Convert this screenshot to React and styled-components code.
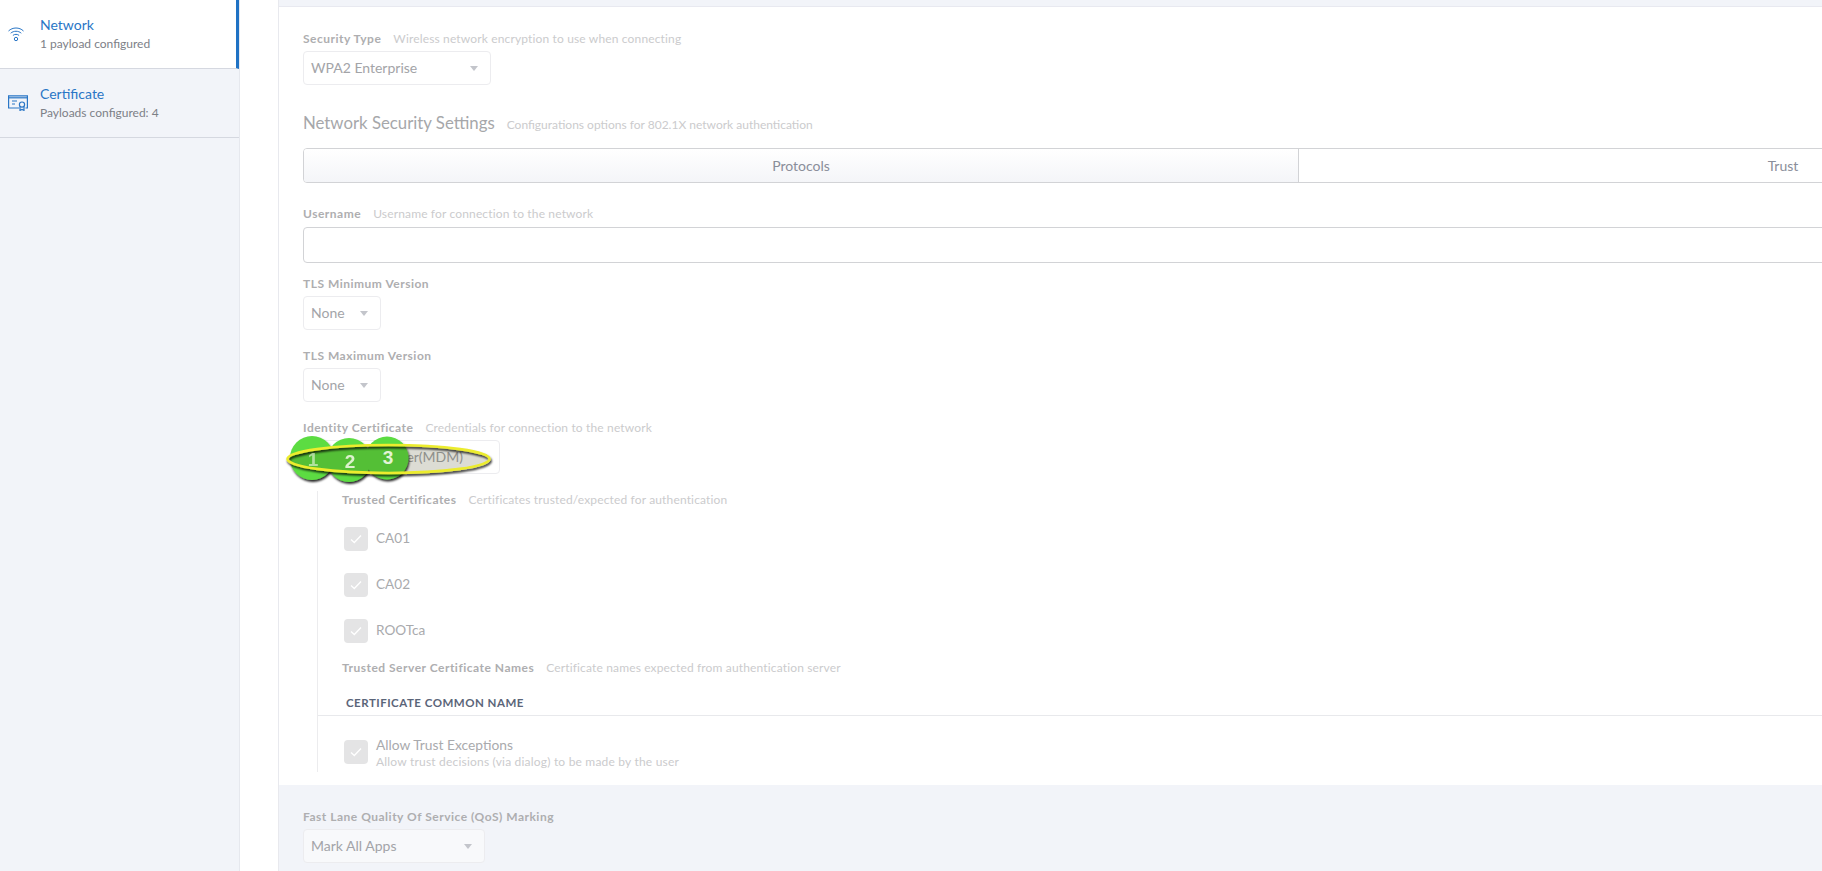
import React from "react";
import styled, { createGlobalStyle } from "styled-components";

const Global = createGlobalStyle`
  html, body { margin: 0; padding: 0; background: #fff; }
  body { font-family: Lato, "Open Sans", sans-serif; }
`;

const Page = styled.div`
  display: flex;
  width: 1822px;
  height: 871px;
  overflow: hidden;
  background: #fff;
`;

const Sidebar = styled.nav`
  flex: 0 0 240px;
  background: #f2f4f9;
  border-right: 1px solid #e6e8ee;
  box-sizing: border-box;
`;

const NavItem = styled.div`
  display: flex;
  align-items: center;
  height: ${(p) => p.$h}px;
  box-sizing: border-box;
  padding-left: 8px;
  gap: 12px;
  background: ${(p) => (p.$active ? "#fff" : "transparent")};
  border-bottom: 1px solid #d5d8e0;
  border-right: ${(p) => (p.$active ? "3px solid #1f72c4" : "none")};
`;

const IconSlot = styled.div`
  flex: 0 0 20px;
  display: flex;
`;

const NavText = styled.div`
  display: flex;
  flex-direction: column;
  gap: 1px;
  margin-top: -1px;
`;

const NavTitle = styled.div`
  font-size: 14px;
  line-height: 20px;
  color: #2a76c6;
`;

const NavSub = styled.div`
  font-size: 12px;
  line-height: 16px;
  color: #7d8087;
`;

const Main = styled.main`
  flex: none;
  width: 2100px;
  margin-left: 38px;
  position: relative;
  border-left: 1px solid #e8e9ee;
`;

const TopStrip = styled.div`
  height: 6px;
  background: #f2f4f9;
  border-bottom: 1px solid #e8e9f0;
`;

const Panel = styled.section`
  padding: 23px 24px 0;
  height: 778px;
  box-sizing: border-box;
  display: flex;
  flex-direction: column;
`;

const LabelRow = styled.div`
  display: flex;
  align-items: baseline;
  gap: 12px;
  height: 18px;
  line-height: 18px;
  margin-top: ${(p) => p.$top || 0}px;
`;

const Label = styled.span`
  font-size: 12px;
  font-weight: 700;
  letter-spacing: 0.5px;
  color: ${(p) => p.$color || "#aeaeb0"};
`;

const Hint = styled.span`
  font-size: 12px;
  letter-spacing: ${(p) => (p.$tight ? "0" : "0.15px")};
  color: #cbcbcd;
`;

const Select = styled.div`
  display: flex;
  align-items: center;
  justify-content: ${(p) => (p.$end ? "flex-end" : "space-between")};
  box-sizing: border-box;
  width: ${(p) => p.$w}px;
  height: 34px;
  margin-top: ${(p) => p.$top ?? 3}px;
  padding: 0 ${(p) => p.$pr || 12}px 2px 7px;
  border: 1px solid #ececef;
  border-radius: 4px;
  background: ${(p) => p.$bg || "#fff"};
  font-size: 14px;
  color: #a3a4a8;
`;

const Caret = styled.i`
  width: 0;
  height: 0;
  margin-top: 2px;
  border-left: 4.5px solid transparent;
  border-right: 4.5px solid transparent;
  border-top: 5px solid #c3c5cb;
`;

const Heading = styled.div`
  display: flex;
  align-items: baseline;
  gap: 12px;
  margin-top: 25px;
  height: 26px;
  line-height: 26px;
`;

const HeadingText = styled.span`
  font-size: 16.8px;
  color: #a6a7aa;
`;

const Tabs = styled.div`
  display: flex;
  height: 35px;
  margin-top: 12px;
  box-sizing: border-box;
  border: 1px solid #d2d3d6;
  border-radius: 4px;
  overflow: hidden;
`;

const Tab = styled.div`
  flex: 0 0 ${(p) => p.$w}px;
  box-sizing: border-box;
  display: flex;
  align-items: center;
  justify-content: center;
  font-size: 14px;
  color: #8a8e9a;
  background: ${(p) => (p.$on ? "linear-gradient(#ffffff, #f4f5f8)" : "#fff")};
  border-right: ${(p) => (p.$on ? "1px solid #d2d3d6" : "none")};
`;

const TextBox = styled.div`
  height: 36px;
  margin-top: 4px;
  box-sizing: border-box;
  border: 1px solid #d2d3d6;
  border-radius: 4px;
`;

const Nested = styled.div`
  margin: 17px 0 0 14px;
  height: 281px;
  border-left: 1px solid #ececee;
  display: flex;
  flex-direction: column;
`;

const NestedLabel = styled(LabelRow)`
  padding-left: 24px;
`;

const CheckRow = styled.div`
  display: flex;
  align-items: center;
  gap: 8px;
  height: 24px;
  padding-left: 26px;
  margin-top: ${(p) => p.$top}px;
  font-size: 13.6px;
  color: #a9aaad;
`;

const CheckLabel = styled.span`
  margin-top: -2px;
`;

const CheckBox = styled.span`
  flex: none;
  display: flex;
  align-items: center;
  justify-content: center;
  width: 24px;
  height: 24px;
  border-radius: 4px;
  background: #e4e4e5;
`;

const TableHead = styled.div`
  margin-top: 17px;
  padding: 0 0 3px 28px;
  height: 18px;
  line-height: 18px;
  font-size: 11.5px;
  font-weight: 700;
  letter-spacing: 0.5px;
  color: #5b6579;
  border-bottom: 1px solid #e8e9ec;
`;

const AllowRow = styled.div`
  display: flex;
  gap: 8px;
  padding-left: 26px;
  margin-top: 24px;
`;

const AllowText = styled.div`
  display: flex;
  flex-direction: column;
  margin-top: -5px;
`;

const AllowTitle = styled.div`
  font-size: 13.8px;
  line-height: 19px;
  color: #a9aaad;
`;

const AllowSub = styled.div`
  font-size: 12px;
  line-height: 16px;
  letter-spacing: 0.2px;
  color: #cbcbcd;
`;

const Footer = styled.section`
  background: #f2f4f9;
  padding: 20px 24px 0;
  height: 100px;
  box-sizing: border-box;
`;

const Marker = styled.svg`
  position: absolute;
  left: 1px;
  top: 428px;
  pointer-events: none;
`;

const Check = () => (
  <svg width="14" height="12" viewBox="0 0 14 12" fill="none">
    <path d="M2 6.5 L5.3 9.5 L12 2.5" stroke="#fff" strokeWidth="1.3" />
  </svg>
);

const WifiIcon = () => (
  <svg width="16" height="15" viewBox="0 0 16 15" fill="none" stroke="#2a76c6" strokeWidth="1">
    <path d="M0.5 4 C4.5 0 11.5 0 15.5 4" />
    <path d="M2.7 6.2 C5.6 3.6 10.4 3.6 13.3 6.2" />
    <path d="M4.9 8.4 C6.6 7 9.4 7 11.1 8.4" />
    <circle cx="8" cy="12" r="1.7" />
  </svg>
);

const CertIcon = () => (
  <svg width="20" height="16" viewBox="0 0 20 16" fill="none" stroke="#2a76c6" strokeWidth="1.2">
    <path d="M11 13 H0.6 V0.8 H19.4 V13 H17.5" />
    <path d="M0.6 2.8 H19.4" />
    <path d="M4 6 H9 M4 9 H7" />
    <circle cx="14" cy="9.6" r="2.6" />
    <path d="M12 11.6 V15.4 L14 14.4 L16 15.4 V11.6" />
  </svg>
);

const Annotation = () => (
  <Marker width="240" height="70" viewBox="0 0 240 70">
    <defs>
      <filter id="drop" x="-20%" y="-20%" width="140%" height="160%">
        <feDropShadow dx="1" dy="2" stdDeviation="1.1" floodColor="#000" floodOpacity="0.85" />
      </filter>
    </defs>
    <g filter="url(#drop)">
      <circle cx="32" cy="30" r="22" fill="#5cdc42" />
      <circle cx="69" cy="32" r="22" fill="#5cdc42" />
      <circle cx="107" cy="30" r="21.5" fill="#5cdc42" />
    </g>
    <ellipse cx="108.5" cy="31" rx="101" ry="14" fill="rgba(50,50,0,0.17)" />
    <ellipse cx="108.5" cy="31" rx="101" ry="14" fill="none" stroke="#ecec2e" strokeWidth="2.6" filter="url(#drop)" />
    <g fontFamily="Liberation Sans, sans-serif" fontWeight="700" fontSize="19" fill="#e4f4d6" textAnchor="middle">
      <text x="33" y="38" opacity="0.65">1</text>
      <text x="70" y="40" opacity="0.95">2</text>
      <text x="108" y="36">3</text>
    </g>
  </Marker>
);

export default function App() {
  return (
    <Page>
      <Global />
      <Sidebar>
        <NavItem $active $h={69}>
          <IconSlot><WifiIcon /></IconSlot>
          <NavText>
            <NavTitle>Network</NavTitle>
            <NavSub>1 payload configured</NavSub>
          </NavText>
        </NavItem>
        <NavItem $h={69}>
          <IconSlot><CertIcon /></IconSlot>
          <NavText>
            <NavTitle>Certificate</NavTitle>
            <NavSub>Payloads configured: 4</NavSub>
          </NavText>
        </NavItem>
      </Sidebar>
      <Main>
        <TopStrip />
        <Panel>
          <LabelRow>
            <Label>Security Type</Label>
            <Hint>Wireless network encryption to use when connecting</Hint>
          </LabelRow>
          <Select $w={188}>
            WPA2 Enterprise
            <Caret />
          </Select>
          <Heading>
            <HeadingText>Network Security Settings</HeadingText>
            <Hint $tight>Configurations options for 802.1X network authentication</Hint>
          </Heading>
          <Tabs>
            <Tab $on $w={995}>Protocols</Tab>
            <Tab $w={968}>Trust</Tab>
          </Tabs>
          <LabelRow $top={22}>
            <Label>Username</Label>
            <Hint>Username for connection to the network</Hint>
          </LabelRow>
          <TextBox />
          <LabelRow $top={12}>
            <Label>TLS Minimum Version</Label>
          </LabelRow>
          <Select $w={78}>
            None
            <Caret />
          </Select>
          <LabelRow $top={17}>
            <Label>TLS Maximum Version</Label>
          </LabelRow>
          <Select $w={78}>
            None
            <Caret />
          </Select>
          <LabelRow $top={17}>
            <Label>Identity Certificate</Label>
            <Hint>Credentials for connection to the network</Hint>
          </LabelRow>
          <Select $w={197} $end $pr={36}>
            Server(MDM)
          </Select>
          <Nested>
            <NestedLabel>
              <Label>Trusted Certificates</Label>
              <Hint>Certificates trusted/expected for authentication</Hint>
            </NestedLabel>
            <CheckRow $top={18}><CheckBox><Check /></CheckBox><CheckLabel>CA01</CheckLabel></CheckRow>
            <CheckRow $top={22}><CheckBox><Check /></CheckBox><CheckLabel>CA02</CheckLabel></CheckRow>
            <CheckRow $top={22}><CheckBox><Check /></CheckBox><CheckLabel>ROOTca</CheckLabel></CheckRow>
            <NestedLabel $top={16}>
              <Label>Trusted Server Certificate Names</Label>
              <Hint>Certificate names expected from authentication server</Hint>
            </NestedLabel>
            <TableHead>CERTIFICATE COMMON NAME</TableHead>
            <AllowRow>
              <CheckBox><Check /></CheckBox>
              <AllowText>
                <AllowTitle>Allow Trust Exceptions</AllowTitle>
                <AllowSub>Allow trust decisions (via dialog) to be made by the user</AllowSub>
              </AllowText>
            </AllowRow>
          </Nested>
        </Panel>
        <Footer>
          <Label>Fast Lane Quality Of Service (QoS) Marking</Label>
          <Select $w={182} $bg="#f8f9fb" $top={5}>
            Mark All Apps
            <Caret />
          </Select>
        </Footer>
        <Annotation />
      </Main>
    </Page>
  );
}
